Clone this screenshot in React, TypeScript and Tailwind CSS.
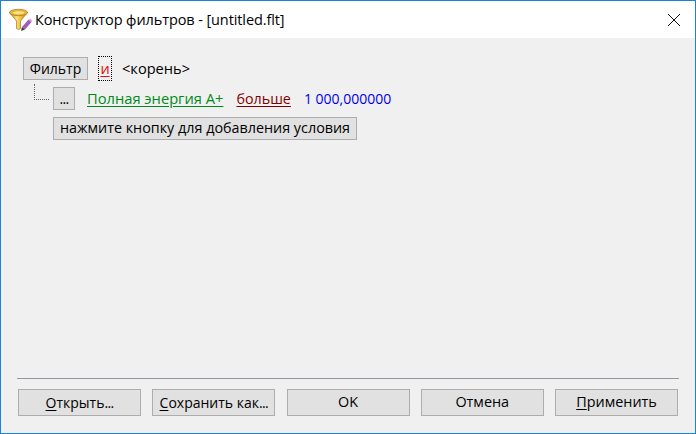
const font = { fontFamily: '"Open Sans", "Noto Sans", sans-serif' }

function FunnelIcon() {
  return (
    <svg width="24" height="24" viewBox="0 0 24 24" className="shrink-0">
      <defs>
        <linearGradient id="gold" x1="0" y1="0" x2="1" y2="0">
          <stop offset="0" stopColor="#c98a18" />
          <stop offset="0.4" stopColor="#ffdf70" />
          <stop offset="1" stopColor="#c4850f" />
        </linearGradient>
      </defs>
      <path d="M0.5 4.5 L7.5 13 L7.5 20.5 Q9.5 22.5 11.5 20.5 L11.5 13 L18.5 4.5 Z" fill="url(#gold)" stroke="#a87414" strokeWidth="0.7" />
      <ellipse cx="9.5" cy="4.5" rx="9" ry="3.2" fill="#eab535" stroke="#a87414" strokeWidth="0.7" />
      <ellipse cx="9.5" cy="4.7" rx="6" ry="1.5" fill="#fbe48a" />
      <path d="M13 19 L19.5 11.5 L22.5 14 L16 21.5 Z" fill="#a35bb5" />
      <path d="M19.5 11.5 L21 10.5 L23.5 12.8 L22.5 14 Z" fill="#d9a9e0" />
      <path d="M13 19 L16 21.5 L12 23 Z" fill="#3b3b3b" />
    </svg>
  )
}

function DialogButton({ children, small }: { children: React.ReactNode; small?: boolean }) {
  return (
    <button
      className={`w-[123px] h-[27px] bg-[#e1e1e1] border border-[#adadad] text-black leading-none whitespace-nowrap ${
        small ? 'text-[14px]' : 'text-[14.4px]'
      }`}
    >
      {children}
    </button>
  )
}

export default function App() {
  return (
    <div
      className="w-[696px] h-[434px] flex flex-col border border-[#1883d7] bg-[#f0f0f0] text-black text-[14px] overflow-hidden"
      style={font}
    >
      <div className="h-[37px] shrink-0 bg-white flex items-center pl-[8px] pr-[14px]">
        <FunnelIcon />
        <span className="ml-[2px] flex-1 text-[14.5px] tracking-[-0.1px] whitespace-nowrap">
          Конструктор фильтров - [untitled.flt]
        </span>
        <svg width="14" height="14" viewBox="0 0 14 14">
          <path d="M1 1 L13 13 M13 1 L1 13" stroke="#111" strokeWidth="1" fill="none" />
        </svg>
      </div>

      <div className="flex-1 flex flex-col px-[16px]">
        <div className="flex-1 pt-[19px] pl-[6px]">
          <div className="flex items-center h-[23px]">
            <button className="w-[65px] h-[23px] bg-[#e1e1e1] border border-[#adadad] leading-none">Фильтр</button>
            <span className="ml-[10px] w-[14px] h-[25px] border border-dotted border-black flex items-center justify-center text-[#e01010] text-[14.5px] underline underline-offset-2">
              и
            </span>
            <span className="ml-[10px] text-[14.6px]">&lt;корень&gt;</span>
          </div>
          <div className="flex items-start h-[30px]">
            <div className="ml-[11px] mt-[4px] mr-[4px] w-[15px] h-[16px] border-l border-b border-dotted border-[#666]" />
            <button className="mt-[7px] w-[22px] h-[23px] bg-[#e1e1e1] border border-[#adadad] leading-none tracking-[-0.7px]">...</button>
            <div className="mt-[7px] h-[23px] flex items-center">
              <a className="ml-[12px] text-[14.7px] text-[#008a20] underline underline-offset-2">Полная энергия A+</a>
              <a className="ml-[13px] text-[14.3px] text-[#800000] underline underline-offset-2">больше</a>
              <span className="ml-[13px] text-[#0000ee]">1 000,000000</span>
            </div>
          </div>
          <button className="mt-[7px] ml-[30px] w-[304px] h-[23px] bg-[#e1e1e1] border border-[#adadad] text-[14.35px] leading-none whitespace-nowrap">
            нажмите кнопку для добавления условия
          </button>
        </div>

        <div className="h-px bg-[#8f98a3]" />
        <div className="flex justify-between px-px pt-[10px] pb-[17px]">
          <DialogButton small>
            <span className="underline underline-offset-2">О</span>ткрыть<span className="tracking-[-0.7px]">...</span>
          </DialogButton>
          <DialogButton small>
            <span className="underline underline-offset-2">С</span>охранить как<span className="tracking-[-0.7px]">...</span>
          </DialogButton>
          <DialogButton>OK</DialogButton>
          <DialogButton>Отмена</DialogButton>
          <DialogButton>
            <span className="underline underline-offset-2">П</span>рименить
          </DialogButton>
        </div>
      </div>
    </div>
  )
}
